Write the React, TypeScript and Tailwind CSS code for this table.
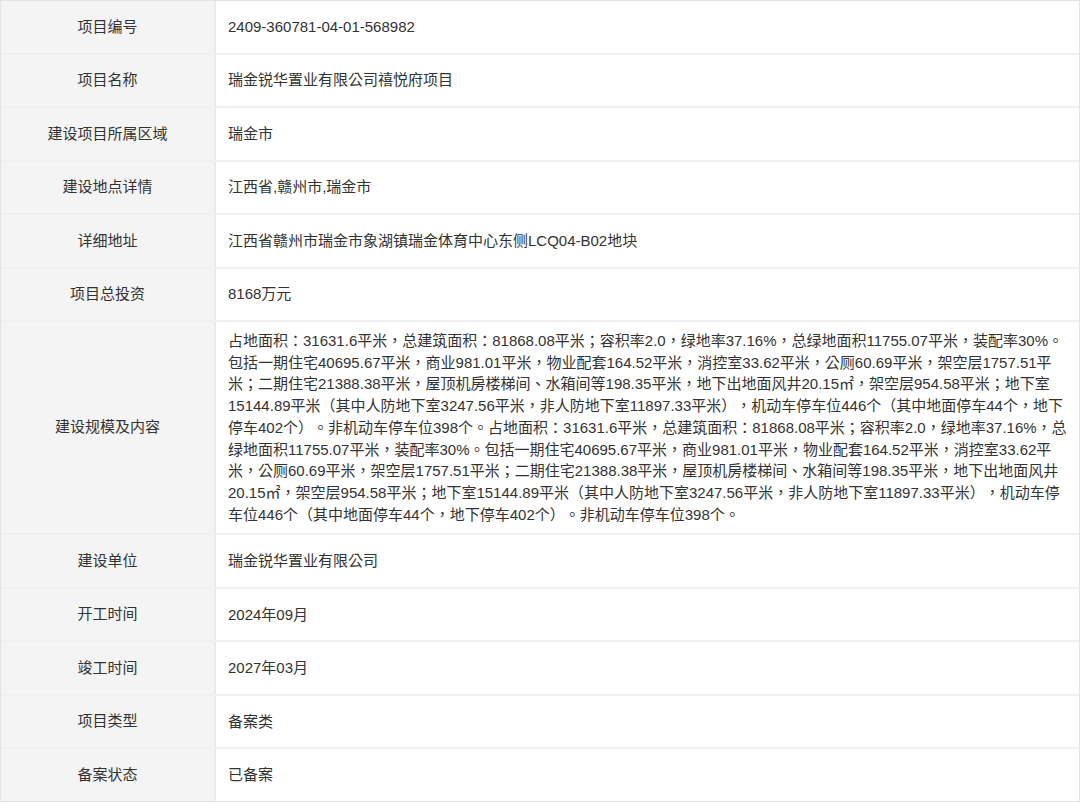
const rows: [string, string][] = [
  ['项目编号', '2409-360781-04-01-568982'],
  ['项目名称', '瑞金锐华置业有限公司禧悦府项目'],
  ['建设项目所属区域', '瑞金市'],
  ['建设地点详情', '江西省,赣州市,瑞金市'],
  ['详细地址', '江西省赣州市瑞金市象湖镇瑞金体育中心东侧LCQ04-B02地块'],
  ['项目总投资', '8168万元'],
  [
    '建设规模及内容',
    '占地面积：31631.6平米，总建筑面积：81868.08平米；容积率2.0，绿地率37.16%，总绿地面积11755.07平米，装配率30%。包括一期住宅40695.67平米，商业981.01平米，物业配套164.52平米，消控室33.62平米，公厕60.69平米，架空层1757.51平米；二期住宅21388.38平米，屋顶机房楼梯间、水箱间等198.35平米，地下出地面风井20.15㎡，架空层954.58平米；地下室15144.89平米（其中人防地下室3247.56平米，非人防地下室11897.33平米），机动车停车位446个（其中地面停车44个，地下停车402个）。非机动车停车位398个。占地面积：31631.6平米，总建筑面积：81868.08平米；容积率2.0，绿地率37.16%，总绿地面积11755.07平米，装配率30%。包括一期住宅40695.67平米，商业981.01平米，物业配套164.52平米，消控室33.62平米，公厕60.69平米，架空层1757.51平米；二期住宅21388.38平米，屋顶机房楼梯间、水箱间等198.35平米，地下出地面风井20.15㎡，架空层954.58平米；地下室15144.89平米（其中人防地下室3247.56平米，非人防地下室11897.33平米），机动车停车位446个（其中地面停车44个，地下停车402个）。非机动车停车位398个。',
  ],
  ['建设单位', '瑞金锐华置业有限公司'],
  ['开工时间', '2024年09月'],
  ['竣工时间', '2027年03月'],
  ['项目类型', '备案类'],
  ['备案状态', '已备案'],
];

export default function App() {
  return (
    <div
      className="w-[1080px] h-[804px] bg-white text-[15px] text-[#333]"
      style={{ fontFamily: '"Liberation Sans", "Noto Sans CJK SC", sans-serif' }}
    >
      <div className="border border-[#e3e3e3]">
        {rows.map(([label, value], i) => (
          <div key={label} className={`flex ${i > 0 ? 'border-t-2 border-[#f0f0f0]' : ''}`}>
            <div className="w-[215px] shrink-0 bg-[#f4f4f4] border-r-2 border-[#ebebeb] flex items-center justify-center min-h-[51.5px] py-2">
              {label}
            </div>
            <div
              className="flex-1 flex items-center pl-3 pr-2 py-2 leading-[21.7px] [text-spacing-trim:space-all]"
              style={{ fontFamily: '"Liberation Sans", "Noto Sans CJK TC", sans-serif' }}
            >
              <span>{value}</span>
            </div>
          </div>
        ))}
      </div>
    </div>
  );
}
